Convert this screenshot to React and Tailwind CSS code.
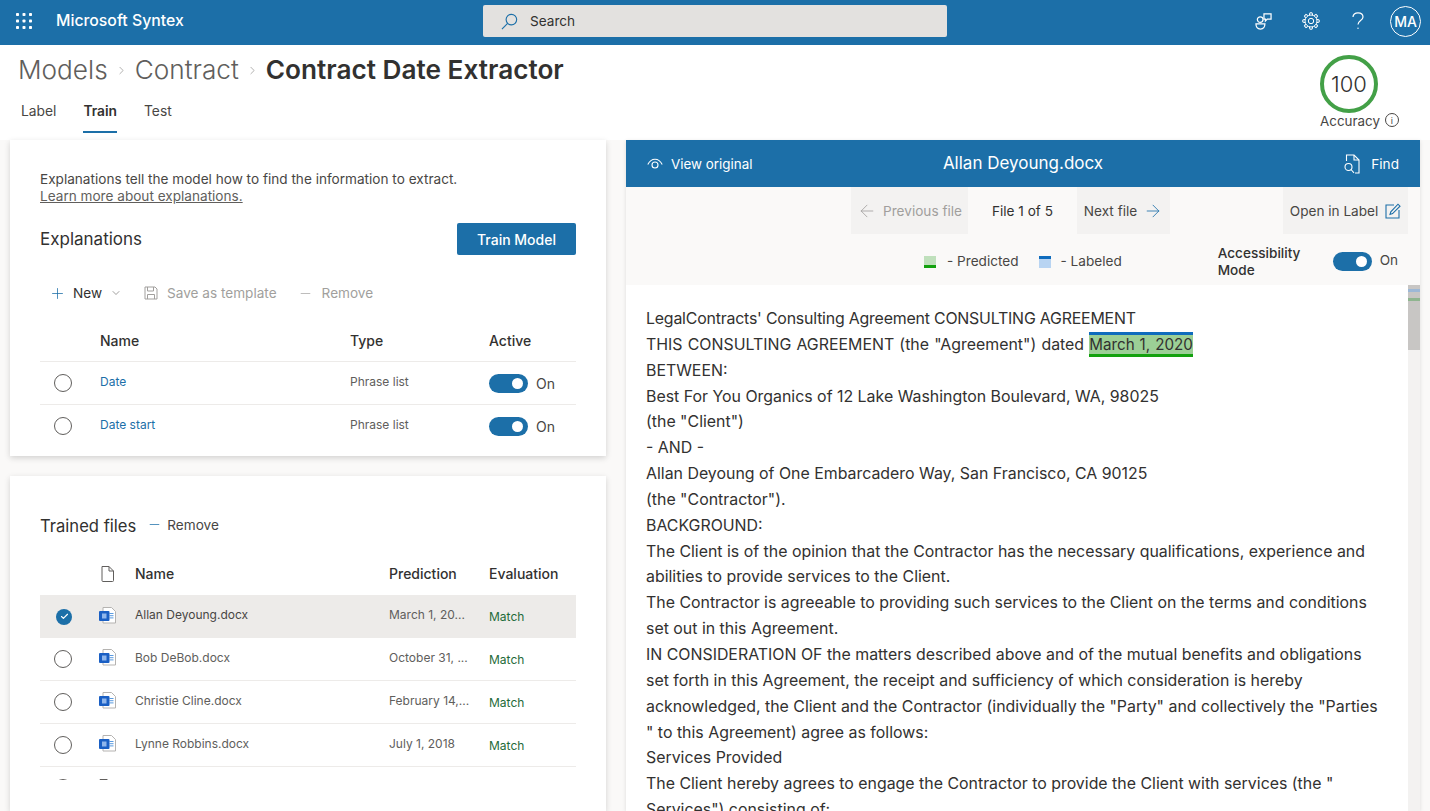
import React from "react";
import { ChevronRight, ChevronDown, Plus, Minus, ArrowLeft, ArrowRight, Check } from "lucide-react";

function Waffle() {
  const dots = [];
  for (let y = 0; y < 3; y++) for (let x = 0; x < 3; x++) dots.push(<rect key={x + "-" + y} x={x * 6.5} y={y * 6.5} width="3" height="3" rx="0.8" fill="#fff" />);
  return <svg width="16" height="16" viewBox="0 0 16 16">{dots}</svg>;
}
function SearchIcon() {
  return (
    <svg width="17" height="17" viewBox="0 0 18 18" fill="none" stroke="#1c6fa8" strokeWidth="1.2">
      <circle cx="11" cy="7" r="5.6" />
      <path d="M7 11 L1 17" />
    </svg>
  );
}
function Feedback() {
  return (
    <svg width="17" height="17" viewBox="0 0 18 18" fill="none" stroke="#fff" strokeWidth="1.3">
      <circle cx="5.5" cy="7" r="3" />
      <path d="M1 11.5 H10.5 C10.5 15 9 17 5.8 17 C2.5 17 1 15 1 11.5 Z" />
      <path d="M9.5 1 H17 V6.5 H13 L11 8.5 V6.5 H9.5 Z" />
    </svg>
  );
}
function Gear() {
  const teeth = [];
  for (let i = 0; i < 8; i++) teeth.push(<path key={i} transform={"rotate(" + i * 45 + " 9 9)"} d="M7.4 3 L7.9 0.8 H10.1 L10.6 3" />);
  return (
    <svg width="18" height="18" viewBox="0 0 18 18" fill="none" stroke="#fff" strokeWidth="1">
      <circle cx="9" cy="9" r="6" />
      <circle cx="9" cy="9" r="2.7" />
      {teeth}
    </svg>
  );
}
function Question() {
  return (
    <svg width="12" height="18" viewBox="0 0 12 18" fill="none" stroke="#fff" strokeWidth="1.2">
      <path d="M1 5 C1 2.5 3 0.8 6 0.8 C9 0.8 11 2.5 11 5 C11 8.5 6 8.5 6 12.5" />
      <circle cx="6" cy="16.3" r="0.7" fill="#fff" stroke="none" />
    </svg>
  );
}
function Eye() {
  return (
    <svg width="16" height="12" viewBox="0 0 16 12" fill="none" stroke="#fff" strokeWidth="1.1">
      <path d="M0.8 6.5 C3 2 6 1.2 8 1.2 C10 1.2 13 2 15.2 6.5" />
      <circle cx="8" cy="7" r="3" />
    </svg>
  );
}
function FindIcon() {
  return (
    <svg width="18" height="20" viewBox="0 0 18 20" fill="none" stroke="#fff" strokeWidth="1.1">
      <path d="M3.5 7 V1 H11 L16 6 V19 H12" />
      <path d="M11 1 V6 H16" />
      <circle cx="5.5" cy="13" r="3.5" />
      <path d="M8 15.5 L11 18.8" />
    </svg>
  );
}
function EditIcon() {
  return (
    <svg width="16" height="16" viewBox="0 0 16 16" fill="none" stroke="#1c6fa8" strokeWidth="1.1">
      <path d="M9 2 H1 V15 H14 V7" />
      <path d="M5 11.5 L5.8 8.8 L13 1.2 L15 3.2 L7.6 10.6 Z" />
    </svg>
  );
}
function SaveIcon() {
  return (
    <svg width="14" height="14" viewBox="0 0 14 14" fill="none" stroke="#a19f9d" strokeWidth="1">
      <path d="M1 1 H11 L13 3 V13 H1 Z" />
      <path d="M3.5 1 V5 H9.5 V1 M3.5 13 V8.5 H10.5 V13" />
    </svg>
  );
}
function WordIcon() {
  return (
    <svg width="17" height="17" viewBox="0 0 17 17">
      <path d="M4 .5 H12.5 L16.5 4.5 V16 H4 Z" fill="#fff" stroke="#b5b3b1" />
      <path d="M10.5 6.5 H14.5 M10.5 8.7 H14.5 M10.5 10.9 H14.5" stroke="#5a9be0" strokeWidth="1" />
      <rect x="0" y="4" width="10.5" height="10" rx="1" fill="#1a5fc4" />
      <rect x="3" y="6.5" width="4.5" height="5" fill="#8fb6ec" />
    </svg>
  );
}
function FileIcon() {
  return (
    <svg width="13" height="16" viewBox="0 0 13 16" fill="none" stroke="#605e5c" strokeWidth="1">
      <path d="M1 .5 H8 L12.5 5 V14.5 A1 1 0 0 1 11.5 15.5 H2 A1 1 0 0 1 1 14.5 Z" />
      <path d="M8 .5 V5 H12.5" />
    </svg>
  );
}
function Toggle() {
  return (
    <span className="flex h-[19px] w-[39px] items-center justify-end rounded-full bg-[#1c6fa8] pr-[5px]">
      <span className="h-[11px] w-[11px] rounded-full bg-white" />
    </span>
  );
}
function Radio() {
  return <span className="block h-[18px] w-[18px] rounded-full border border-[#605e5c] bg-white" />;
}

const explanations = [
  { name: "Date", type: "Phrase list" },
  { name: "Date start", type: "Phrase list" },
];
const files = [
  { name: "Allan Deyoung.docx", pred: "March 1, 20...", selected: true },
  { name: "Bob DeBob.docx", pred: "October 31, ..." },
  { name: "Christie Cline.docx", pred: "February 14,..." },
  { name: "Lynne Robbins.docx", pred: "July 1, 2018" },
];

const docLines = [
  "BETWEEN:",
  "Best For You Organics of 12 Lake Washington Boulevard, WA, 98025",
  '(the "Client")',
  "- AND -",
  "Allan Deyoung of One Embarcadero Way, San Francisco, CA 90125",
  '(the "Contractor").',
  "BACKGROUND:",
  "The Client is of the opinion that the Contractor has the necessary qualifications, experience and",
  "abilities to provide services to the Client.",
  "The Contractor is agreeable to providing such services to the Client on the terms and conditions",
  "set out in this Agreement.",
  "IN CONSIDERATION OF the matters described above and of the mutual benefits and obligations",
  "set forth in this Agreement, the receipt and sufficiency of which consideration is hereby",
  'acknowledged, the Client and the Contractor (individually the "Party" and collectively the "Parties',
  '" to this Agreement) agree as follows:',
  "Services Provided",
  'The Client hereby agrees to engage the Contractor to provide the Client with services (the "',
  'Services") consisting of:',
];

export default function App() {
  return (
    <div className="flex h-[811px] w-[1430px] flex-col overflow-hidden bg-white text-[#323130] [font-family:Inter,sans-serif]">
      <header className="flex h-[45px] shrink-0 items-center bg-[#1c6fa8] pb-[3px] text-white">
        <div className="ml-[16px] w-[40px]"><Waffle /></div>
        <span className="w-[127px] whitespace-nowrap text-[15.8px] font-medium">Microsoft Syntex</span>
        <div className="ml-[300px] flex h-[32px] w-[464px] items-center rounded-[2px] bg-[#e3e1df] pl-[18px] text-[13.6px] text-[#323130]">
          <SearchIcon />
          <span className="ml-[12px]">Search</span>
        </div>
        <div className="ml-auto flex items-center">
          <Feedback />
          <span className="ml-[30px]"><Gear /></span>
          <span className="ml-[32px]"><Question /></span>
          <span className="mr-[9px] ml-[26px] flex h-[31px] w-[31px] items-center justify-center rounded-full border border-white text-[14px] font-medium">MA</span>
        </div>
      </header>

      <div className="flex h-[95px] shrink-0 justify-between bg-white">
        <div className="pl-[18px]">
          <div className="flex h-[50px] items-center text-[26.2px]">
            <span className="font-light text-[#605e5c]">Models</span>
            <ChevronRight className="mx-[7px] h-[13px] w-[13px] text-[#8a8886]" strokeWidth={1.2} />
            <span className="font-light text-[#605e5c]">Contract</span>
            <ChevronRight className="mx-[7px] h-[13px] w-[13px] text-[#8a8886]" strokeWidth={1.2} />
            <span className="font-semibold text-[#323130]">Contract Date Extractor</span>
          </div>
          <nav className="mt-[1px] flex gap-[27px] pl-[3px] text-[13.8px] text-[#484644]">
            <span className="py-[5px]">Label</span>
            <span className="border-b-2 border-[#1c6fa8] pb-[9px] pt-[5px] font-semibold text-[#323130]">Train</span>
            <span className="py-[5px]">Test</span>
          </nav>
        </div>
        <div className="mr-[52px] mt-[10px] w-[58px]">
          <div className="flex h-[58px] w-[58px] items-center justify-center rounded-full border-[4.5px] border-[#43a047] text-[22px] font-light">100</div>
          <div className="mt-[-2px] flex items-center whitespace-nowrap text-[13.4px] text-[#484644]">
            Accuracy
            <span className="mb-[2px] ml-[5px] flex h-[14px] w-[14px] shrink-0 items-center justify-center rounded-full border border-[#484644] text-[9px] leading-none">i</span>
          </div>
        </div>
      </div>

      <div className="flex min-h-0 flex-1 bg-[#faf9f8] pl-[10px]">
        <div className="flex w-[596px] flex-col gap-[20px]">
          <section className="h-[316px] shrink-0 bg-white px-[30px] pt-[31px] shadow-[0_2px_6px_rgba(0,0,0,0.16)]">
            <p className="text-[13.6px] leading-[17px] text-[#484644]">Explanations tell the model how to find the information to extract.</p>
            <a className="block text-[13.6px] leading-[17px] text-[#605e5c] underline">Learn more about explanations.</a>
            <div className="mt-[18px] flex h-[32px] items-center justify-between">
              <h2 className="mt-[2px] text-[17px] text-[#323130]">Explanations</h2>
              <button className="h-[32px] w-[119px] rounded-[2px] bg-[#1c6fa8] text-[14px] font-medium text-white">Train Model</button>
            </div>
            <div className="mt-[22px] flex h-[32px] items-center pl-[9px] text-[13.6px]">
              <Plus className="h-[17px] w-[17px] text-[#1c6fa8]" strokeWidth={1.1} />
              <span className="ml-[7px]">New</span>
              <ChevronDown className="ml-[8px] h-[12px] w-[12px] text-[#605e5c]" strokeWidth={1.2} />
              <span className="ml-[22px]"><SaveIcon /></span>
              <span className="ml-[9px] text-[#a19f9d]">Save as template</span>
              <Minus className="ml-[21px] h-[15px] w-[15px] text-[#a19f9d]" strokeWidth={1.1} />
              <span className="ml-[9px] text-[#a19f9d]">Remove</span>
            </div>
            <div className="mt-[10px] h-[117px] overflow-hidden">
              <div className="flex h-[43px] items-center border-b border-[#edebe9] text-[14px] font-medium">
                <span className="ml-[60px] w-[250px]">Name</span>
                <span className="w-[139px]">Type</span>
                <span>Active</span>
              </div>
              {explanations.map((e) => (
                <div key={e.name} className="flex h-[43px] items-center border-b border-[#edebe9]">
                  <span className="ml-[14px] w-[46px]"><Radio /></span>
                  <span className="mb-[2px] w-[250px] text-[12px] text-[#1c6fa8]">{e.name}</span>
                  <span className="mb-[2px] w-[139px] text-[12px] text-[#605e5c]">{e.type}</span>
                  <Toggle />
                  <span className="ml-[8px] text-[14px] text-[#484644]">On</span>
                </div>
              ))}
            </div>
          </section>
          <section className="min-h-0 flex-1 bg-white px-[30px] pt-[37px] shadow-[0_2px_6px_rgba(0,0,0,0.16)]">
            <div className="flex h-[26px] items-center">
              <h2 className="mt-[1px] text-[16.6px]">Trained files</h2>
              <Minus className="mb-[4px] ml-[11px] h-[15px] w-[15px] text-[#1c6fa8]" strokeWidth={1.2} />
              <span className="mb-[2px] ml-[5px] text-[13.6px] text-[#484644]">Remove</span>
            </div>
            <div className="mt-[13px] h-[228px] overflow-hidden">
              <div className="flex h-[43px] items-center text-[14px] font-medium">
                <span className="ml-[61px] w-[34px]"><FileIcon /></span>
                <span className="w-[254px]">Name</span>
                <span className="w-[100px]">Prediction</span>
                <span>Evaluation</span>
              </div>
              {files.map((f) => (
                <div key={f.name} className={"flex h-[43px] items-center " + (f.selected ? "bg-[#edebe9]" : "border-b border-[#edebe9]")}>
                  <span className="ml-[14px] w-[45px]">
                    {f.selected ? (
                      <span className="ml-[2px] flex h-[16px] w-[16px] items-center justify-center rounded-full bg-[#1c6fa8]"><Check className="h-[9px] w-[9px] text-white" strokeWidth={3} /></span>
                    ) : <Radio />}
                  </span>
                  <span className="mb-[3px] w-[36px]"><WordIcon /></span>
                  <span className={"mb-[3px] w-[254px] text-[12px] " + (f.selected ? "text-[#484644]" : "text-[#605e5c]")}>{f.name}</span>
                  <span className="mb-[3px] w-[100px] text-[12px] text-[#605e5c]">{f.pred}</span>
                  <span className="mt-[1px] text-[12px] text-[#1f6b3a]">Match</span>
                </div>
              ))}
              <div className="flex h-[43px] items-center border-b border-[#edebe9]">
                <span className="ml-[14px] w-[45px]"><Radio /></span>
                <span className="mb-[3px] w-[36px]"><FileIcon /></span>
              </div>
            </div>
          </section>
        </div>

        <main className="ml-[20px] flex w-[794px] flex-col bg-white shadow-[0_1px_4px_rgba(0,0,0,0.12)]">
          <div className="flex h-[47px] shrink-0 items-center justify-between bg-[#1c6fa8] px-[21px] pt-[1px] text-white">
            <div className="flex w-[200px] items-center text-[13.4px]"><Eye /><span className="ml-[8px]">View original</span></div>
            <span className="text-[17px]">Allan Deyoung.docx</span>
            <div className="flex w-[200px] items-center justify-end text-[13.6px]"><FindIcon /><span className="ml-[10px]">Find</span></div>
          </div>
          <div className="relative flex h-[48px] shrink-0 items-start justify-center bg-[#faf9f8] pr-[25px] text-[13.6px]">
            <span className="flex h-[47px] w-[117px] items-center justify-center bg-[#f3f2f1] pt-[1px] text-[#a19f9d]">
              <ArrowLeft className="mr-[6px] h-[20px] w-[20px]" strokeWidth={1} />Previous file
            </span>
            <span className="flex h-[47px] w-[109px] items-center justify-center pt-[1px]">File 1 of 5</span>
            <span className="flex h-[47px] w-[93px] items-center justify-center bg-[#f3f2f1] pt-[1px] text-[#484644]">
              Next file<ArrowRight className="ml-[6px] h-[20px] w-[20px] text-[#1c6fa8]" strokeWidth={1} />
            </span>
            <span className="absolute right-[12px] top-0 flex h-[47px] w-[125px] items-center justify-center gap-[7px] bg-[#f3f2f1] pt-[1px] text-[#484644]">Open in Label<EditIcon /></span>
          </div>
          <div className="flex h-[50px] shrink-0 items-center bg-[#faf9f8] pt-[3px] text-[13.6px] text-[#484644]">
            <span className="ml-[298px] flex h-[12px] w-[12px] flex-col justify-end bg-[#bfe0bc]"><span className="h-[3px] bg-[#13a10e]" /></span>
            <span className="ml-[11px]">- Predicted</span>
            <span className="ml-[20px] flex h-[12px] w-[12px] flex-col bg-[#b8d4f2]"><span className="h-[3px] bg-[#0f6cbd]" /></span>
            <span className="ml-[10px]">- Labeled</span>
            <span className="ml-[96px] w-[115px] font-medium leading-[17px] text-[#323130]">Accessibility Mode</span>
            <Toggle />
            <span className="mb-[3px] ml-[8px]">On</span>
          </div>
          <div className="flex min-h-0 flex-1 overflow-hidden">
            <div className="min-w-0 flex-1 whitespace-nowrap pl-[20px] pt-[21px] text-[15.9px] leading-[25.85px] text-[#323130]">
              <div className="tracking-[-0.2px]">LegalContracts' Consulting Agreement CONSULTING AGREEMENT</div>
              <div className="[word-spacing:0.7px]">
                THIS CONSULTING AGREEMENT (the "Agreement") dated{" "}
                <span className="border-b-[3px] border-t-[3px] border-b-[#13a10e] border-t-[#0f6cbd] bg-[#9ccf96] text-[15.2px]">March 1, 2020</span>
              </div>
              {docLines.map((l) => (
                <div key={l}>{l}</div>
              ))}
            </div>
            <div className="w-[12px] shrink-0 bg-[#f3f2f1]">
              <div className="h-[65px] w-full overflow-hidden bg-[#c8c6c4] pt-[4px]">
                <div className="h-[3px] bg-[#9db8d6]" />
                <div className="mt-[6px] h-[3px] bg-[#8fb58f]" />
              </div>
            </div>
          </div>
        </main>
      </div>
    </div>
  );
}
